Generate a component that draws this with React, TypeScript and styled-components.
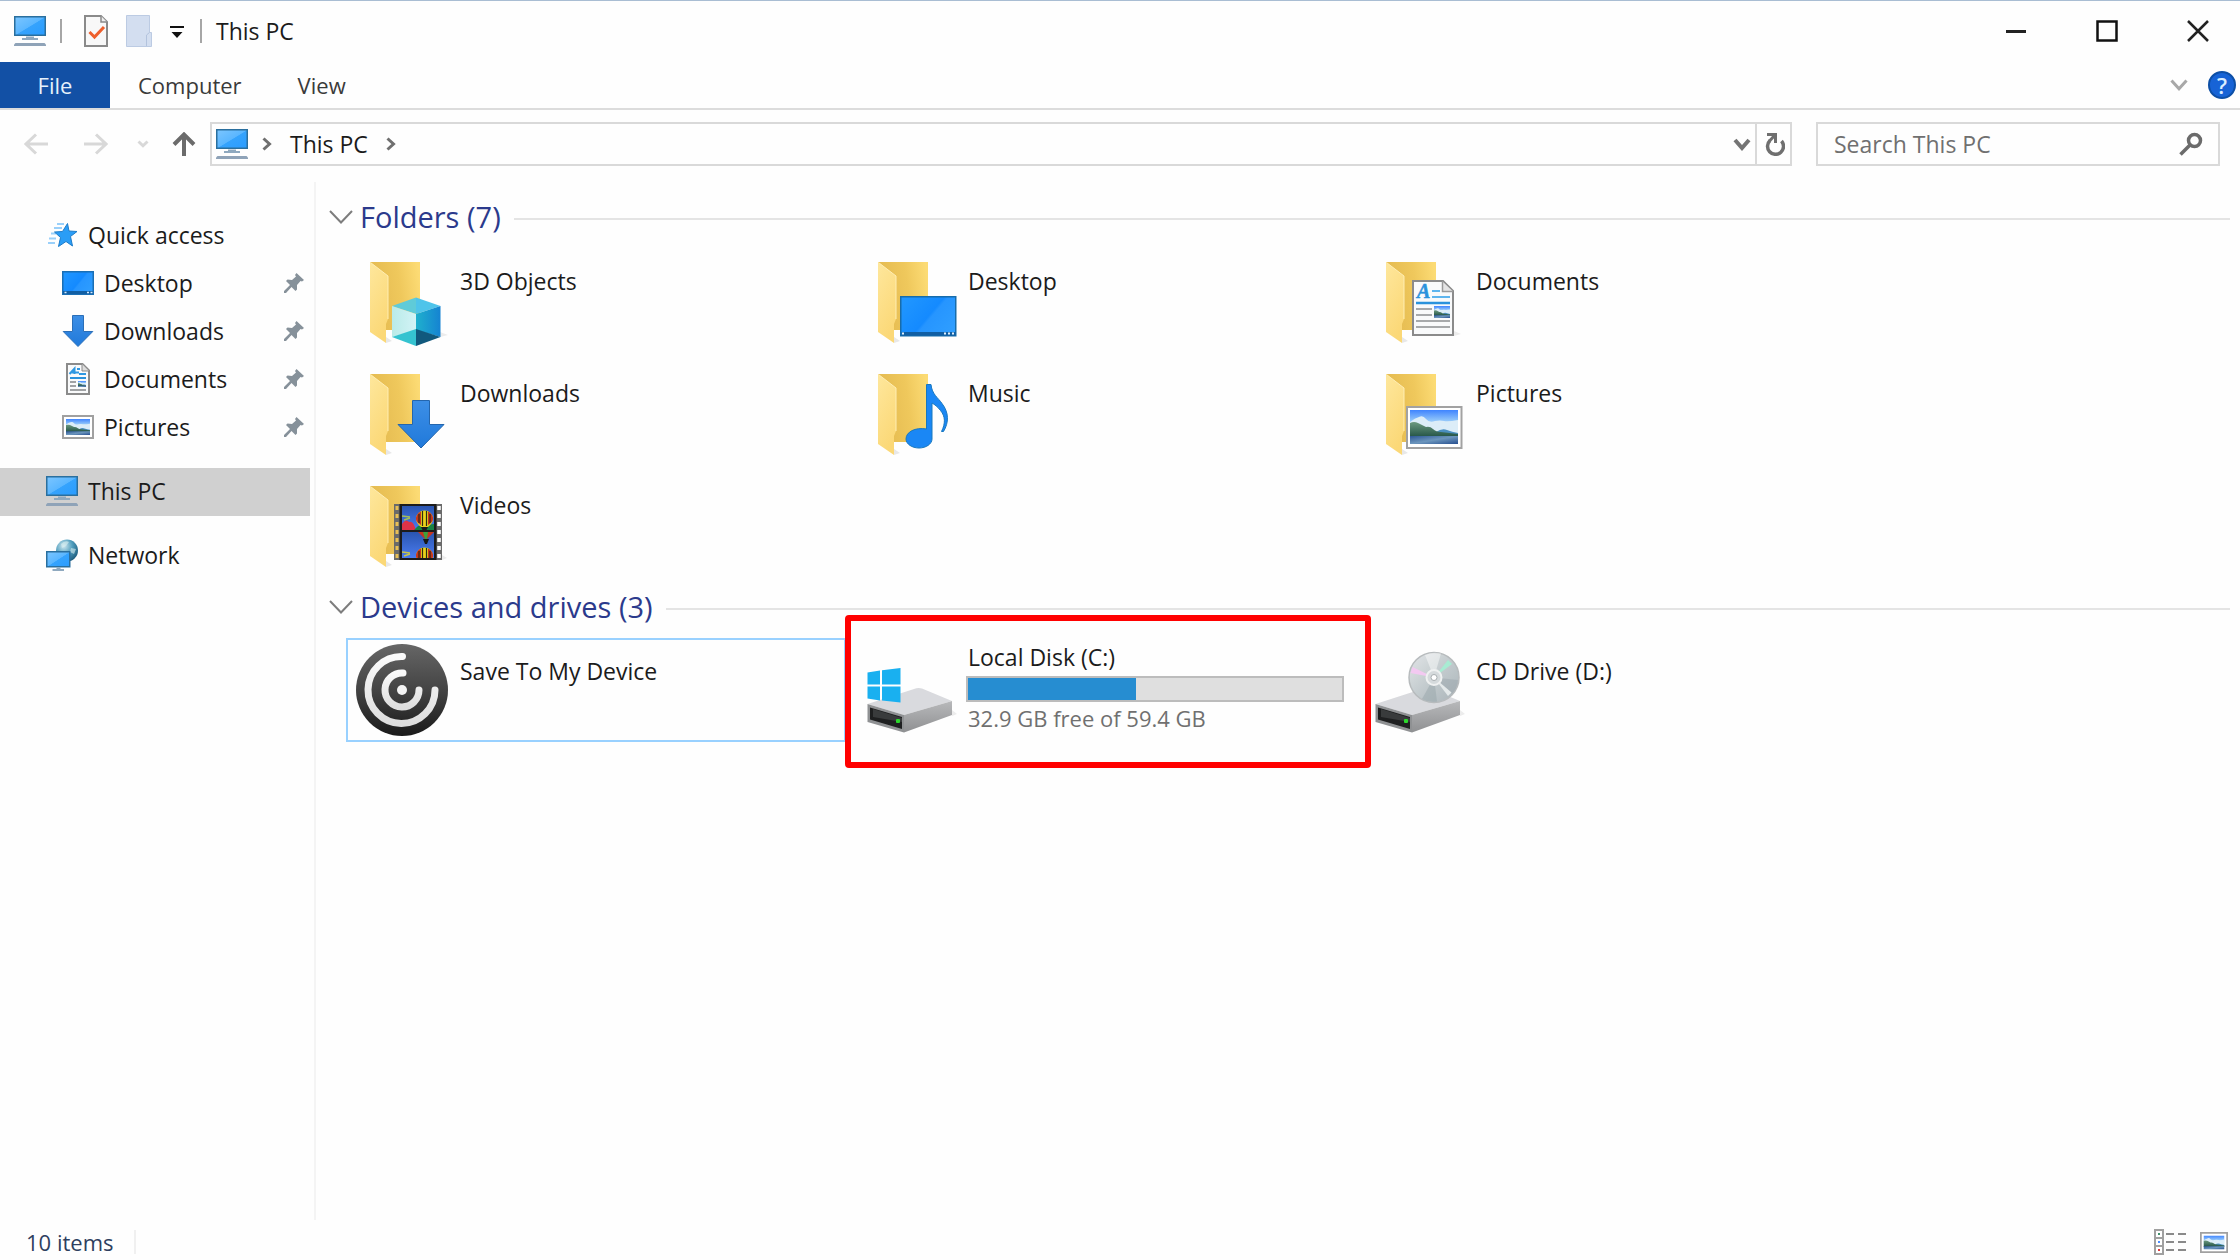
import React, { useState } from "react";
import styled, { createGlobalStyle, css } from "styled-components";

const GlobalStyle = createGlobalStyle`
  * { box-sizing: border-box; }
  body {
    margin: 0;
    background: #fefefe;
    color: #1b1b1b;
    font-family: "Open Sans", "Noto Sans", sans-serif;
    font-size: 23px;
    line-height: 28px;
  }
  button, input { font: inherit; color: inherit; }
  ul { list-style: none; margin: 0; padding: 0; }
  svg { display: block; flex: none; }
`;

const bareButton = css`
  display: flex;
  align-items: center;
  justify-content: center;
  padding: 0;
  border: 0;
  background: none;
`;

/* ---------- layout ---------- */

const Window = styled.div`
  display: flex;
  flex-direction: column;
  min-height: 100vh;
  border-top: 1px solid #a9bdd3;
`;

const TitleBar = styled.header`
  display: flex;
  align-items: center;
  height: 61px;
  padding: 0 0 2px 14px;
`;

const Divider = styled.span<{ $faint?: boolean }>`
  width: 2px;
  height: 24px;
  background: ${(p) => (p.$faint ? "#f0f0f0" : "#a6a6a6")};
`;

const QuickTools = styled.div`
  display: flex;
  align-items: center;
  gap: 16px;
  margin: 0 16px 0 14px;
`;

const ToolButtons = styled.div`
  display: flex;
  align-items: center;
  gap: 18px;
  padding-left: 6px;
`;

const IconButton = styled.button`
  ${bareButton}
`;

const WindowTitle = styled.h1`
  margin: 0 0 0 14px;
  font: inherit;
`;

const CaptionButtons = styled.div`
  display: flex;
  margin-left: auto;
`;

const CaptionButton = styled.button`
  ${bareButton}
  width: 91px;
  height: 59px;
  &:last-child { width: 88px; padding-left: 4px; }
`;

const Ribbon = styled.nav`
  display: flex;
  height: 48px;
  border-bottom: 2px solid #dcdcdc;
  font-size: 22px;
`;

const Tab = styled.button<{ $primary?: boolean }>`
  ${bareButton}
  padding: 0 28px;
  color: #3a3a3a;
  ${(p) =>
    p.$primary &&
    css`
      width: 110px;
      background: #1250a5;
      color: #e6f1fb;
    `}
`;

const RibbonEnd = styled.div`
  display: flex;
  align-items: center;
  gap: 20px;
  margin-left: auto;
  padding-right: 4px;
`;

const NavBar = styled.div`
  display: flex;
  align-items: center;
  padding: 12px 20px 16px 24px;
`;

const NavButtons = styled.div`
  display: flex;
  align-items: center;
  margin-right: 14px;
`;

const NavButton = styled.button<{ $space?: number }>`
  ${bareButton}
  margin-right: ${(p) => p.$space ?? 0}px;
`;

const AddressBar = styled.div`
  display: flex;
  flex: 1;
  height: 44px;
  border: 2px solid #d9d9d9;
  margin-right: 24px;
`;

const Crumbs = styled.div`
  display: flex;
  flex: 1;
  align-items: center;
  gap: 14px;
  padding-left: 4px;
`;

const CrumbPath = styled.span`
  display: flex;
  align-items: center;
  gap: 18px;
`;

const AddressButton = styled.button<{ $split?: boolean }>`
  ${bareButton}
  width: ${(p) => (p.$split ? 35 : 28)}px;
  border-left: ${(p) => (p.$split ? "2px solid #d9d9d9" : "0")};
  padding-left: 2px;
`;

const SearchBox = styled.label`
  display: flex;
  align-items: center;
  width: 404px;
  height: 44px;
  padding: 0 15px 0 16px;
  border: 2px solid #d9d9d9;
`;

const SearchInput = styled.input`
  flex: 1;
  min-width: 0;
  padding: 0;
  border: 0;
  outline: 0;
  background: none;
  &::placeholder { color: #707070; opacity: 1; }
`;

const Body = styled.div`
  display: flex;
  flex: 1;
`;

const Sidebar = styled.nav`
  width: 316px;
  padding: 30px 4px 0 0;
  border-right: 2px solid #f4f4f4;
`;

const SideGroup = styled.ul`
  margin-bottom: 16px;
`;

const SideLink = styled.a<{ $nested?: boolean; $current?: boolean }>`
  display: flex;
  align-items: center;
  gap: 10px;
  height: 48px;
  padding: 0 6px 2px ${(p) => (p.$nested ? 62 : 46)}px;
  background: ${(p) => (p.$current ? "#d0d0d0" : "none")};
  color: inherit;
  text-decoration: none;
`;

const SideLabel = styled.span`
  flex: 1;
`;

const Main = styled.main`
  flex: 1;
  padding: 6px 10px 0 13px;
`;

const Group = styled.section`
  margin-bottom: 2px;
`;

const GroupHeader = styled.button`
  ${bareButton}
  width: 100%;
  height: 60px;
  padding-bottom: 2px;
  gap: 7px;
`;

const GroupTitle = styled.span`
  color: #2b3a8c;
  font-size: 29px;
  line-height: 36px;
`;

const GroupRule = styled.span`
  flex: 1;
  height: 2px;
  margin: 4px 0 0 6px;
  background: #e4e4e4;
`;

const Tiles = styled.ul`
  display: grid;
  grid-template-columns: repeat(auto-fill, 500px);
  gap: 8px;
  padding-left: 17px;
`;

const TileItem = styled.li<{ $marked?: boolean }>`
  position: relative;
  ${(p) =>
    p.$marked &&
    css`
      &::after {
        content: "";
        position: absolute;
        inset: -23px -17px -26px -9px;
        border: 6px solid #ff0000;
        border-radius: 4px;
        pointer-events: none;
      }
    `}
`;

const Tile = styled.button<{ $focused?: boolean }>`
  display: flex;
  gap: 8px;
  width: 100%;
  height: 104px;
  padding: 2px 6px;
  border: 2px solid ${(p) => (p.$focused ? "#99d1ff" : "transparent")};
  background: none;
  text-align: left;
`;

const TileText = styled.span<{ $detailed?: boolean }>`
  display: flex;
  flex-direction: column;
  padding-top: ${(p) => (p.$detailed ? 1 : 15)}px;
`;

const TileName = styled.span`
  padding-left: 2px;
`;

const Capacity = styled.progress`
  appearance: none;
  display: block;
  width: 378px;
  height: 26px;
  margin: 5px 0 2px;
  border: 2px solid #bcbcbc;
  background: #dfdfdf;
  &::-webkit-progress-bar { background: #dfdfdf; }
  &::-webkit-progress-value { background: #268dd1; }
`;

const FreeSpace = styled.span`
  padding-left: 2px;
  color: #707070;
  font-size: 22px;
`;

const StatusBar = styled.footer`
  display: flex;
  align-items: center;
  height: 40px;
  padding: 4px 12px 0 26px;
  color: #2e3f5f;
  font-size: 22px;
`;

const ItemCount = styled.span`
  margin-right: 20px;
`;

const ViewButtons = styled.div`
  display: flex;
  align-items: center;
  gap: 12px;
  margin-left: auto;
`;

/* ---------- small icons ---------- */

const HiddenDefs = styled.svg`
  position: absolute;
`;

const Gradients = () => (
  <HiddenDefs width="0" height="0" aria-hidden="true">
    <defs>
      <linearGradient id="screen" x1="0" y1="0" x2="1" y2="1">
        <stop offset="0" stopColor="#7cc6ff" />
        <stop offset="0.5" stopColor="#5ab6ff" />
        <stop offset="0.52" stopColor="#35a3fd" />
        <stop offset="1" stopColor="#2a9cff" />
      </linearGradient>
      <linearGradient id="desk" x1="0" y1="0.2" x2="1" y2="0.8">
        <stop offset="0" stopColor="#2096ff" />
        <stop offset="0.5" stopColor="#148aff" />
        <stop offset="0.55" stopColor="#2695ff" />
        <stop offset="1" stopColor="#2f9eff" />
      </linearGradient>
      <linearGradient id="back" x1="0" y1="0.5" x2="1" y2="0.3">
        <stop offset="0" stopColor="#e3b94f" />
        <stop offset="0.6" stopColor="#efc85c" />
        <stop offset="1" stopColor="#fcdb74" />
      </linearGradient>
      <linearGradient id="flap" x1="0" y1="0" x2="0.4" y2="1">
        <stop offset="0" stopColor="#fee79c" />
        <stop offset="1" stopColor="#fbd877" />
      </linearGradient>
      <linearGradient id="arrow" x1="0" y1="0" x2="0" y2="1">
        <stop offset="0" stopColor="#3d8fe6" />
        <stop offset="1" stopColor="#2079da" />
      </linearGradient>
      <linearGradient id="sky" x1="0" y1="0" x2="0" y2="1">
        <stop offset="0" stopColor="#3f84ff" />
        <stop offset="0.3" stopColor="#8fc4fa" />
        <stop offset="0.6" stopColor="#dff1fb" />
      </linearGradient>
      <linearGradient id="land" x1="0" y1="0" x2="0" y2="1">
        <stop offset="0" stopColor="#6c9a80" />
        <stop offset="1" stopColor="#1f4f42" />
      </linearGradient>
      <linearGradient id="water" x1="0" y1="0" x2="1" y2="1">
        <stop offset="0" stopColor="#2d5795" />
        <stop offset="0.5" stopColor="#6c96bd" />
        <stop offset="1" stopColor="#274f90" />
      </linearGradient>
      <linearGradient id="film" x1="0" y1="0" x2="0" y2="1">
        <stop offset="0" stopColor="#2a55b0" />
        <stop offset="1" stopColor="#4a7cf0" />
      </linearGradient>
      <linearGradient id="cubeLeft" x1="0" y1="0" x2="1" y2="0">
        <stop offset="0" stopColor="#b9ebe8" />
        <stop offset="1" stopColor="#d3f3f6" />
      </linearGradient>
      <linearGradient id="cubeRight" x1="0" y1="0" x2="1" y2="0">
        <stop offset="0" stopColor="#1fb0cd" />
        <stop offset="1" stopColor="#1583d2" />
      </linearGradient>
      <linearGradient id="dial" x1="0" y1="0" x2="0" y2="1">
        <stop offset="0" stopColor="#666" />
        <stop offset="0.5" stopColor="#444" />
        <stop offset="1" stopColor="#1a1a1a" />
      </linearGradient>
      <linearGradient id="rings" x1="0" y1="0" x2="0" y2="1">
        <stop offset="0" stopColor="#fafafa" />
        <stop offset="1" stopColor="#dedede" />
      </linearGradient>
      <linearGradient id="driveSide" x1="0" y1="0" x2="0" y2="1">
        <stop offset="0" stopColor="#b8b9bb" />
        <stop offset="1" stopColor="#8f9092" />
      </linearGradient>
      <linearGradient id="disc" x1="0" y1="0" x2="1" y2="1">
        <stop offset="0" stopColor="#e3e6e8" />
        <stop offset="0.5" stopColor="#c3cbce" />
        <stop offset="1" stopColor="#aab4b9" />
      </linearGradient>
      <radialGradient id="globe" cx="0.35" cy="0.3" r="0.8">
        <stop offset="0" stopColor="#cfe8f0" />
        <stop offset="0.5" stopColor="#4f9dbd" />
        <stop offset="1" stopColor="#155273" />
      </radialGradient>
    </defs>
  </HiddenDefs>
);

const MonitorIcon = () => (
  <svg width="32" height="30" viewBox="0 0 32 30">
    <rect x="0.75" y="0.75" width="30.5" height="18.5" fill="url(#screen)" stroke="#2a6f9e" strokeWidth="1.5" />
    <path d="M12 20.5h8v1.500h4v2H8v-2h4z" fill="#8fa9bf" />
    <path d="M1.5 27h29l1.500 1.500V30H0v-1.500z" fill="#8fa3b8" />
  </svg>
);

const PropertiesIcon = () => (
  <svg width="24" height="32" viewBox="0 0 24 32">
    <path d="M1 1h16l6 6v24H1z" fill="#f8f8f8" stroke="#8a8a8a" strokeWidth="2" />
    <path d="M17 1v6h6" fill="#eee" stroke="#8a8a8a" strokeWidth="1.500" />
    <path d="M5.500 17l5 5L20 12" fill="none" stroke="#ee5f2c" strokeWidth="3" />
  </svg>
);

const NewFolderIcon = () => (
  <svg width="26" height="32" viewBox="0 0 26 32">
    <path d="M0.500 0.500h23v17h2v14h-25z" fill="#d3def0" stroke="#bccbe3" />
    <path d="M20.500 31V20l3-2.500" fill="none" stroke="#b3c3dd" />
  </svg>
);

const CustomizeIcon = () => (
  <svg width="14" height="16" viewBox="0 0 14 16">
    <path d="M0 3h14v2H0zM1.500 9h11L7 15z" fill="#111" />
  </svg>
);

type ChevronProps = { width: number; height: number; color: string; weight: number };
const ChevronDown = ({ width, height, color, weight }: ChevronProps) => (
  <svg width={width} height={height} viewBox={`0 0 ${width} ${height}`}>
    <path
      d={`M${weight / 2} ${weight / 2}L${width / 2} ${height - weight * 0.75}L${width - weight / 2} ${weight / 2}`}
      fill="none"
      stroke={color}
      strokeWidth={weight}
    />
  </svg>
);

const CrumbChevron = () => (
  <svg width="10" height="14" viewBox="0 0 10 14">
    <path d="M1.500 1.500L7.500 7l-6 5.500" fill="none" stroke="#6f6f6f" strokeWidth="3" />
  </svg>
);

const ArrowIcon = ({ flip }: { flip?: boolean }) => (
  <svg width="24" height="22" viewBox="0 0 24 22">
    <path
      d={flip ? "M0 11h22M12 1.500l10 9.500-10 9.500" : "M24 11H2M12 1.500L2 11l10 9.500"}
      fill="none"
      stroke="#d8d8d8"
      strokeWidth="3"
    />
  </svg>
);

const UpIcon = () => (
  <svg width="24" height="24" viewBox="0 0 24 24">
    <path d="M12 24V3M2 12.500L12 2.500l10 10" fill="none" stroke="#6b6b6b" strokeWidth="4" />
  </svg>
);

const RefreshIcon = () => (
  <svg width="20" height="24" viewBox="0 0 20 24">
    <path d="M16.500 9A8 8 0 1 1 5 8.500" fill="none" stroke="#6f6f6f" strokeWidth="3.500" />
    <path d="M2 2.500h8.500V11" fill="none" stroke="#6f6f6f" strokeWidth="3" />
    <path d="M10 3L4.500 9" stroke="#6f6f6f" strokeWidth="3" />
  </svg>
);

const SearchIcon = () => (
  <svg width="24" height="24" viewBox="0 0 24 24">
    <circle cx="15.500" cy="8.500" r="6" fill="none" stroke="#6b6b6b" strokeWidth="3.500" />
    <path d="M11 13L1.500 22.500" stroke="#6b6b6b" strokeWidth="3.500" />
  </svg>
);

const HelpBadge = styled.span`
  display: flex;
  align-items: center;
  justify-content: center;
  width: 28px;
  height: 28px;
  border: 2px solid #0d4fa6;
  border-radius: 50%;
  background: #1763d6;
  color: #d9edff;
  font-size: 22px;
  font-weight: 600;
`;

const StarIcon = () => (
  <svg width="32" height="26" viewBox="0 0 32 26">
    <path d="M11 2h7M8 6h8M3 16.500h7M2 21h7M5 11.500h5" stroke="#9ad0fa" strokeWidth="2" />
    <path
      d="M21.500 1.500l1.500 7.500 8 0.500-6.500 5 2 9.500-6.500-4.500-7.500 5 2-9-6-5.500 8-0.500z"
      fill="#2a9df6"
      stroke="#1e7cc9"
    />
  </svg>
);

const DesktopIcon = () => (
  <svg width="32" height="26" viewBox="0 0 32 26">
    <rect x="0.750" y="1.750" width="30.500" height="22.500" fill="url(#desk)" stroke="#1a6fb5" strokeWidth="1.500" />
    <path d="M1 21h30v3H1z" fill="#115ea3" />
    <path d="M2.500 22.500h2M25 22.500h2M28.500 22.500h2" stroke="#d6ecff" strokeWidth="1.500" />
  </svg>
);

const DownloadIcon = () => (
  <svg width="32" height="32" viewBox="0 0 32 32">
    <path d="M10.500 0.500h11V16.500h9.300L16 31.500 1.200 16.500h9.300z" fill="url(#arrow)" stroke="#2b6fb8" />
  </svg>
);

const Landscape = ({ x, y, w, h }: { x: number; y: number; w: number; h: number }) => (
  <svg x={x} y={y} width={w} height={h} viewBox="0 0 48 34" preserveAspectRatio="none">
    <rect width="48" height="34" fill="url(#sky)" />
    <path d="M0 12Q5 8 9 7q4-2 7 2t9 2q5-1 9 0t14-1v16H0z" fill="#dcedf8" />
    <path d="M26 22q6-4 11-2t11 3v4H26z" fill="#4a8fc0" />
    <path d="M0 13q4-2 8 0t8 4q4-1 7 2t8 3l17 2v4H0z" fill="url(#land)" />
    <rect y="26" width="48" height="8" fill="url(#water)" />
  </svg>
);

const DocumentArt = () => (
  <g>
    <path d="M1 1h30l10 10v44H1z" fill="#f9fafb" stroke="#8b8b8b" strokeWidth="2" />
    <path d="M30.500 1.500v10H41" fill="#e4e4e4" stroke="#9a9a9a" strokeWidth="1.500" />
    <text x="5" y="18" fontFamily="Liberation Serif, serif" fontSize="20" fontWeight="700" fontStyle="italic" fill="#2a92dc" stroke="#2a92dc" strokeWidth="0.5">
      A
    </text>
    <path d="M20 11h8M20 17h18" stroke="#5eb5ee" strokeWidth="2" />
    <path d="M4 23h34" stroke="#2a92dc" strokeWidth="2.500" />
    <path d="M4 29h16M4 35h16M4 41h34M4 47h34" stroke="#a7a9ab" strokeWidth="2" />
    <Landscape x={22} y={26} w={16} h={12} />
  </g>
);

const DocumentIcon = () => (
  <svg width="32" height="32" viewBox="0 0 32 32">
    <path d="M5 1h15.500l6.500 6.500V31H5z" fill="#f9fafb" stroke="#8b8b8b" strokeWidth="2" />
    <path d="M20 1v7h7" fill="#ddd" stroke="#8b8b8b" />
    <path d="M7.500 11L12.500 5.500V11M9 9.500h8M15 6h3M17 11h7" fill="none" stroke="#2f98e2" strokeWidth="2" />
    <path d="M8 15h16" stroke="#2a92dc" strokeWidth="2" />
    <path d="M8 19h6M8 23h6M8 27h16" stroke="#a0a2a4" strokeWidth="2" />
    <Landscape x={16} y={18} w={8} h={6} />
  </svg>
);

const PictureIcon = ({ width = 32 }: { width?: number }) => (
  <svg width={width} height={width * 0.75} viewBox="0 0 32 24">
    <rect x="1" y="1" width="30" height="22" fill="#fff" stroke="#a0a0a0" strokeWidth="2" />
    <Landscape x={4} y={4} w={24} h={16} />
  </svg>
);

const NetworkIcon = () => (
  <svg width="32" height="32" viewBox="0 0 32 32">
    <circle cx="21" cy="11.500" r="11" fill="url(#globe)" />
    <path d="M15 5q4-4 8-2l-3 4-4 2zM25 9l5 1-2 5-4-2z" fill="#d8eef0" opacity="0.6" />
    <rect x="0.750" y="12.750" width="23" height="15" fill="url(#screen)" stroke="#2a6f9e" strokeWidth="1.500" />
    <path d="M10.500 28.500h4V30H18v2H6.500v-2h4z" fill="#8fa9bf" />
  </svg>
);

const PinIcon = () => (
  <svg width="20" height="20" viewBox="0 0 20 20">
    <path d="M12.500 0L20 7l-2 1.500-1.500-0.500-3.500 4 0 4.500-1.500 1.500-4-4L2 20H0v-2l6-6L2 8l1.500-1.500L8 7l4-3.500-1-1.500z" fill="#86919a" />
  </svg>
);

const DetailsViewIcon = () => (
  <svg width="34" height="26" viewBox="0 0 34 26">
    <path d="M1 1h8v24H1zM1 9h8M1 17h8" fill="#fff" stroke="#a0a0a0" strokeWidth="2" />
    <path d="M4 5h2" stroke="#3f8f6a" strokeWidth="2" />
    <path d="M4 13h2" stroke="#4a8cff" strokeWidth="2" />
    <path d="M4 21h2" stroke="#e03a3a" strokeWidth="2" />
    <path d="M12 5h8M24 5h8M12 13h8M24 13h8M12 21h8M24 21h8" stroke="#8a8a8a" strokeWidth="2" />
  </svg>
);

/* ---------- large tile art, drawn on a 96 x 96 grid ---------- */

const Art = ({ children }: { children: React.ReactNode }) => (
  <svg width="96" height="96" viewBox="0 0 96 96" aria-hidden="true">
    {children}
  </svg>
);

const Folder = () => (
  <g>
    <path d="M32 91l6-2-6-4z" fill="#e8e8e8" />
    <path d="M16 10h50v68H31z" fill="url(#back)" />
    <path d="M16 10l18 14v43l-2 5v19L16 80z" fill="url(#flap)" />
    <path d="M16.500 10.500L34 24v43" fill="none" stroke="#ffeeb4" />
  </g>
);

const ObjectsArt = () => (
  <Art>
    <Folder />
    <path d="M86 85l8-2-8-3z" fill="#ececec" />
    <path d="M38 54l24-8.500v16.500z" fill="#5fcbd8" />
    <path d="M62 45.500L86.500 54 62 62z" fill="#4fc4ea" />
    <path d="M38 54l24 8v16l-24 7z" fill="url(#cubeLeft)" />
    <path d="M62 62l24.500-8v31L62 78z" fill="url(#cubeRight)" />
    <path d="M38 85l24-8v17z" fill="#35c3d0" />
    <path d="M62 77l24.500 8L62 94z" fill="#11597d" />
  </Art>
);

const DesktopArt = () => (
  <Art>
    <Folder />
    <rect x="38.750" y="44.750" width="55" height="39" fill="url(#desk)" stroke="#176cab" strokeWidth="1.500" />
    <path d="M39.500 80h54v3.500h-54z" fill="#115ea3" />
    <path d="M40 81.500h2M82 81.500h2M86 81.500h2M90 81.500h2" stroke="#e0f1ff" strokeWidth="2" />
  </Art>
);

const DocumentsArt = () => (
  <Art>
    <Folder />
    <path d="M84 84l7-2-7-3z" fill="#ececec" />
    <g transform="translate(42 28)">
      <DocumentArt />
    </g>
  </Art>
);

const DownloadsArt = () => (
  <Art>
    <Folder />
    <path d="M58.500 36.500h17V60.500h14.500L67 84 44 60.500h14.500z" fill="url(#arrow)" stroke="#2466ad" />
  </Art>
);

const MusicArt = () => (
  <Art>
    <Folder />
    <path
      d="M64.500 20.500h4.500c1 10 7 13 11 19 7 9 7 19 1.500 28h-2c4-8 4-15-1-21-3-4-6-6-8.500-7.500V75c0 5-6 9-13 9s-13-4-13-9c0-7 9-12 20.500-10z"
      fill="#1a87f5"
      stroke="#1878bf"
    />
  </Art>
);

const PicturesArt = () => (
  <Art>
    <Folder />
    <rect x="37" y="43" width="54.500" height="41" fill="#fff" stroke="#a2a2a2" strokeWidth="2" />
    <Landscape x={40} y={46} w={48} h={34} />
  </Art>
);

const Balloon = ({ y }: { y: number }) => (
  <g transform={`translate(0 ${y})`}>
    <path d="M62 8a8.500 8.500 0 0 1 17 0q0 4-5 8h-7q-5-4-5-8z" fill="#e8d21c" />
    <path d="M62 8a8.500 8.500 0 0 1 5-7.500V14q-5-3-5-6zM79 8a8.500 8.500 0 0 0-5-7.500V14q5-3 5-6z" fill="#c8341e" />
    <path d="M68.500 0v15M72.500 0v15M65 3v9M76 3v9" stroke="#2b2b12" strokeWidth="1.200" />
    <path d="M67 16h7l-2 4h-3z" fill="#1b1b1b" />
  </g>
);

const VideosArt = () => (
  <Art>
    <Folder />
    <path d="M88 84l5-2-5-3z" fill="#ececec" />
    <rect x="40" y="28" width="48" height="56" fill="#6a6a6a" />
    <rect x="45.500" y="28" width="37" height="56" fill="#1c1c1c" />
    <path d="M43 30v53" stroke="#e8bf55" strokeWidth="3" strokeDasharray="4 4" />
    <path d="M85 30v53" stroke="#fff" strokeWidth="3.500" strokeDasharray="4 4" />
    <svg x="48" y="30" width="32" height="24" viewBox="48 30 32 24">
      <rect x="48" y="30" width="32" height="24" fill="url(#film)" />
      <path d="M48 48q4-6 7-2 4-2 7 8H48z" fill="#dc3348" />
      <path d="M60 54l4-4 16-2v6z" fill="#188343" />
      <path d="M48 40l8 1M50 44l6-2" fill="none" stroke="#a3be58" strokeWidth="1.500" />
      <Balloon y={35} />
    </svg>
    <svg x="48" y="56" width="32" height="26" viewBox="48 56 32 26">
      <rect x="48" y="56" width="32" height="26" fill="url(#film)" />
      <path d="M64 56h16l-7 7h-2z" fill="#c8341e" />
      <path d="M69 56h5l-1 7h-2z" fill="#3ca03d" />
      <path d="M69 63h6l-2 5h-2z" fill="#171717" />
      <path d="M48 76l8 1M50 80l6-2" fill="none" stroke="#c7c64b" strokeWidth="1.500" />
      <Balloon y={72} />
    </svg>
  </Art>
);

const SaveArt = () => (
  <Art>
    <circle cx="48" cy="48" r="46" fill="url(#dial)" />
    <path d="M48.500 14.500A33.500 33.500 0 1 0 81 48" fill="none" stroke="url(#rings)" strokeWidth="7" strokeLinecap="round" />
    <path d="M49 31A17 17 0 1 0 65 48" fill="none" stroke="url(#rings)" strokeWidth="7" strokeLinecap="round" />
    <circle cx="48" cy="48" r="5" fill="#f4f4f4" />
  </Art>
);

const Drive = () => (
  <g>
    <path d="M90 74l5-2-5-4z" fill="#ececec" />
    <path d="M5.500 62L52 47q4-1.500 8-0.500l30 12.500-48 14z" fill="#d9dade" />
    <path d="M42 73l48-14v14L42 90.500z" fill="url(#driveSide)" />
    <path d="M5.500 62L42 73v17.500L5.500 80z" fill="#8f9193" />
    <path d="M8 65.500l32 9.500v12L8 77.500z" fill="#1e1f20" />
    <path d="M11 67l29 9v4l-29-5z" fill="#393b3c" />
    <rect x="34" y="77" width="4" height="4" rx="1" fill="#2bd82b" />
  </g>
);

const LocalDiskArt = () => (
  <Art>
    <Drive />
    <path d="M5.500 30.500l12.500-2v14H5.500zM20 28.200L38.500 26v16.500H20zM5.500 44.500H18v14l-12.500-2zM20 44.500h18.500V60.500L20 58.500z" fill="#19b0f0" />
  </Art>
);

const CdDriveArt = () => (
  <Art>
    <Drive />
    <circle cx="64" cy="35.500" r="25" fill="url(#disc)" stroke="#b7bbbd" strokeWidth="1.500" />
    <path d="M64 35.500L52 57a24 24 0 0 0 15 2.500z" fill="#98a5aa" opacity="0.5" />
    <path d="M64 35.500L88 38a24 24 0 0 1-6 14z" fill="#98a5aa" opacity="0.450" />
    <path d="M64 35.500L55 13a24 24 0 0 1 16-1.500z" fill="#fff" opacity="0.450" />
    <path d="M64 35.500L40.500 31l2-6z" fill="#f3c9f1" />
    <path d="M64 35.500L78 18l4 4z" fill="#a8ecd3" />
    <path d="M64 35.500L78 54l3.500-3.500z" fill="#e4e9ea" />
    <circle cx="64" cy="35.500" r="7.500" fill="#d5dadc" stroke="#eff1f1" strokeWidth="2" />
    <circle cx="64" cy="35.500" r="3" fill="#fff" stroke="#a8aeb0" />
  </Art>
);

/* ---------- data ---------- */

const pinned = [
  { name: "Desktop", icon: <DesktopIcon /> },
  { name: "Downloads", icon: <DownloadIcon /> },
  { name: "Documents", icon: <DocumentIcon /> },
  { name: "Pictures", icon: <PictureIcon /> },
];

const folders = [
  { name: "3D Objects", art: <ObjectsArt /> },
  { name: "Desktop", art: <DesktopArt /> },
  { name: "Documents", art: <DocumentsArt /> },
  { name: "Downloads", art: <DownloadsArt /> },
  { name: "Music", art: <MusicArt /> },
  { name: "Pictures", art: <PicturesArt /> },
  { name: "Videos", art: <VideosArt /> },
];

type Device = {
  name: string;
  art: React.ReactNode;
  focused?: boolean;
  marked?: boolean;
  usedPercent?: number;
  free?: string;
};

const devices: Device[] = [
  { name: "Save To My Device", art: <SaveArt />, focused: true },
  { name: "Local Disk (C:)", art: <LocalDiskArt />, marked: true, usedPercent: 45, free: "32.9 GB free of 59.4 GB" },
  { name: "CD Drive (D:)", art: <CdDriveArt /> },
];

const TileGroup = ({ title, items }: { title: string; items: Device[] }) => {
  const [open, setOpen] = useState(true);
  return (
    <Group>
      <GroupHeader aria-expanded={open} onClick={() => setOpen(!open)}>
        <ChevronDown width={24} height={14} color="#7d7d7d" weight={2} />
        <GroupTitle>
          {title} ({items.length})
        </GroupTitle>
        <GroupRule />
      </GroupHeader>
      {open && (
        <Tiles>
          {items.map((item) => (
            <TileItem key={item.name} $marked={item.marked}>
              <Tile $focused={item.focused}>
                {item.art}
                <TileText $detailed={!!item.free}>
                  <TileName>{item.name}</TileName>
                  {item.free && (
                    <>
                      <Capacity max={100} value={item.usedPercent} aria-label={`${item.name} used space`} />
                      <FreeSpace>{item.free}</FreeSpace>
                    </>
                  )}
                </TileText>
              </Tile>
            </TileItem>
          ))}
        </Tiles>
      )}
    </Group>
  );
};

export default function App() {
  const [query, setQuery] = useState("");
  return (
    <Window>
      <GlobalStyle />
      <Gradients />
      <TitleBar>
        <MonitorIcon />
        <QuickTools>
          <Divider />
          <ToolButtons>
            <IconButton aria-label="Properties">
              <PropertiesIcon />
            </IconButton>
            <IconButton aria-label="New folder">
              <NewFolderIcon />
            </IconButton>
            <IconButton aria-label="Customize Quick Access Toolbar">
              <CustomizeIcon />
            </IconButton>
          </ToolButtons>
        </QuickTools>
        <Divider />
        <WindowTitle>This PC</WindowTitle>
        <CaptionButtons>
          <CaptionButton aria-label="Minimize">
            <svg width="22" height="22" viewBox="0 0 22 22">
              <path d="M1 11.500h20" stroke="#222" strokeWidth="3" />
            </svg>
          </CaptionButton>
          <CaptionButton aria-label="Maximize">
            <svg width="22" height="22" viewBox="0 0 22 22">
              <rect x="1.500" y="1.500" width="19" height="19" fill="none" stroke="#111" strokeWidth="2.500" />
            </svg>
          </CaptionButton>
          <CaptionButton aria-label="Close">
            <svg width="22" height="22" viewBox="0 0 22 22">
              <path d="M1 1l20 20M21 1L1 21" stroke="#222" strokeWidth="2.500" />
            </svg>
          </CaptionButton>
        </CaptionButtons>
      </TitleBar>

      <Ribbon>
        <Tab $primary>File</Tab>
        <Tab>Computer</Tab>
        <Tab>View</Tab>
        <RibbonEnd>
          <IconButton aria-label="Expand the Ribbon">
            <ChevronDown width={18} height={12} color="#a8a8a8" weight={3} />
          </IconButton>
          <IconButton aria-label="Help">
            <HelpBadge>?</HelpBadge>
          </IconButton>
        </RibbonEnd>
      </Ribbon>

      <NavBar>
        <NavButtons>
          <NavButton aria-label="Back" $space={36}>
            <ArrowIcon />
          </NavButton>
          <NavButton aria-label="Forward" $space={29}>
            <ArrowIcon flip />
          </NavButton>
          <NavButton aria-label="Recent locations" $space={23}>
            <ChevronDown width={12} height={8} color="#d8d8d8" weight={3} />
          </NavButton>
          <NavButton aria-label="Up">
            <UpIcon />
          </NavButton>
        </NavButtons>
        <AddressBar>
          <Crumbs>
            <MonitorIcon />
            <CrumbPath>
              <CrumbChevron />
              <span>This PC</span>
              <CrumbChevron />
            </CrumbPath>
          </Crumbs>
          <AddressButton aria-label="Previous locations">
            <ChevronDown width={18} height={13} color="#747474" weight={4} />
          </AddressButton>
          <AddressButton $split aria-label="Refresh">
            <RefreshIcon />
          </AddressButton>
        </AddressBar>
        <SearchBox>
          <SearchInput
            aria-label="Search This PC"
            placeholder="Search This PC"
            value={query}
            onChange={(e) => setQuery(e.target.value)}
          />
          <SearchIcon />
        </SearchBox>
      </NavBar>

      <Body>
        <Sidebar>
          <SideGroup>
            <li>
              <SideLink href="#quick-access">
                <StarIcon />
                <SideLabel>Quick access</SideLabel>
              </SideLink>
            </li>
            {pinned.map((p) => (
              <li key={p.name}>
                <SideLink href={`#${p.name.toLowerCase()}`} $nested>
                  {p.icon}
                  <SideLabel>{p.name}</SideLabel>
                  <PinIcon />
                </SideLink>
              </li>
            ))}
          </SideGroup>
          <SideGroup>
            <li>
              <SideLink href="#this-pc" $current aria-current="page">
                <MonitorIcon />
                <SideLabel>This PC</SideLabel>
              </SideLink>
            </li>
          </SideGroup>
          <SideGroup>
            <li>
              <SideLink href="#network">
                <NetworkIcon />
                <SideLabel>Network</SideLabel>
              </SideLink>
            </li>
          </SideGroup>
        </Sidebar>
        <Main>
          <TileGroup title="Folders" items={folders} />
          <TileGroup title="Devices and drives" items={devices} />
        </Main>
      </Body>

      <StatusBar>
        <ItemCount>{folders.length + devices.length} items</ItemCount>
        <Divider $faint />
        <ViewButtons>
          <IconButton aria-label="Details view">
            <DetailsViewIcon />
          </IconButton>
          <IconButton aria-label="Large icons view">
            <PictureIcon width={28} />
          </IconButton>
        </ViewButtons>
      </StatusBar>
    </Window>
  );
}
